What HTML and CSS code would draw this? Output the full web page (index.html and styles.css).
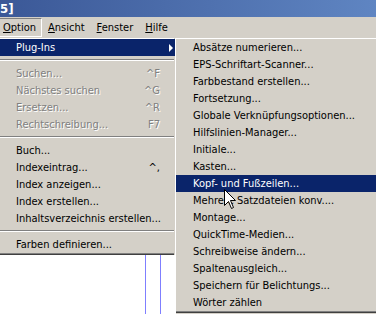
FILE: index.html
```html
<!DOCTYPE html>
<html lang="de">
<head>
    <meta charset="UTF-8">
    <title>Option - Plug-Ins</title>
    <link rel="stylesheet" href="styles.css">
</head>
<body>
<div class="titlebar"><span class="title">5]</span></div>
<div class="menubar">
    <span class="mb-item mb-open"><u>O</u>ption</span>
    <span class="mb-item"><u>A</u>nsicht</span>
    <span class="mb-item"><u>F</u>enster</span>
    <span class="mb-item"><u>H</u>ilfe</span>
</div>
<div class="workspace">
    <div class="leftcol">
        <ul class="menu main">
            <li class="item hot">Plug-Ins<span class="arrow"></span></li>
            <li class="sep"></li>
            <li class="item off">Suchen...<span class="key">^F</span></li>
            <li class="item off">Nächstes suchen<span class="key">^G</span></li>
            <li class="item off">Ersetzen...<span class="key">^R</span></li>
            <li class="item off">Rechtschreibung...<span class="key">F7</span></li>
            <li class="sep"></li>
            <li class="item">Buch...</li>
            <li class="item">Indexeintrag...<span class="key">^,</span></li>
            <li class="item">Index anzeigen...</li>
            <li class="item">Index erstellen...</li>
            <li class="item">Inhaltsverzeichnis erstellen...</li>
            <li class="sep"></li>
            <li class="item">Farben definieren...</li>
        </ul>
        <div class="doc">
            <span class="guide"></span>
            <span class="guide"></span>
        </div>
    </div>
    <ul class="menu sub">
        <li class="item">Absätze numerieren...</li>
        <li class="item">EPS-Schriftart-Scanner...</li>
        <li class="item">Farbbestand erstellen...</li>
        <li class="item">Fortsetzung...</li>
        <li class="item">Globale Verknüpfungsoptionen...</li>
        <li class="item">Hilfslinien-Manager...</li>
        <li class="item">Initiale...</li>
        <li class="item">Kasten...</li>
        <li class="item hot">Kopf- und Fußzeilen...</li>
        <li class="item">Mehrere Satzdateien konv....</li>
        <li class="item">Montage...</li>
        <li class="item">QuickTime-Medien...</li>
        <li class="item">Schreibweise ändern...</li>
        <li class="item">Spaltenausgleich...</li>
        <li class="item">Speichern für Belichtungs...</li>
        <li class="item">Wörter zählen</li>
    </ul>
</div>
<svg class="cursor" width="13" height="20" viewBox="0 0 13 20">
    <path d="M0.5 0.5 L0.5 16.5 L4.5 12.5 L7.5 19.5 L9.5 18.5 L6.5 11.5 L11.5 11.5 Z" fill="#fff" stroke="#000" stroke-width="1"/>
</svg>
</body>
</html>
```

FILE: styles.css
```css
html, body { margin:0; padding:0; }
body { width:376px; height:314px; overflow:hidden; position:relative; background:#d4d0c8;
       font-family:"DejaVu Sans Condensed","DejaVu Sans",sans-serif; font-size:11px; color:#000; }

.titlebar { height:17px; background:linear-gradient(to right,#3b5897,#5f85c2); color:#fff; overflow:hidden; }
.title { display:block; margin-left:0; font-weight:bold; font-size:13px; line-height:17px; }

.menubar { height:20px; display:flex; align-items:center; }
.mb-item { height:17px; line-height:17px; padding:0 6px; }
.mb-item u { text-decoration:underline; }
.mb-open { margin-left:-3px; padding:0 5px 0 5px; border:1px solid; border-color:#808080 #fff #fff #808080; }

.workspace { display:flex; align-items:flex-start; }
.leftcol { width:180px; margin-left:-3px; flex:none; }

.menu { list-style:none; margin:0; padding:1px; background:#d4d0c8;
        border:1px solid; border-color:#d4d0c8 #404040 #404040 #d4d0c8;
        box-shadow:inset 1px 1px #fff, inset -1px -1px #808080; }
.main { padding-bottom:1px; }
.item { position:relative; height:17px; line-height:17px; padding-left:17px; white-space:nowrap; }
.item.hot { background:#0a246a; color:#fff; }
.item.off { color:#808080; text-shadow:1px 1px 0 #fff; }
.key { position:absolute; right:15px; top:0; }
.sep { height:9px; position:relative; }
.sep::after { content:""; position:absolute; left:1px; right:1px; top:3px; height:1px; background:#808080; border-bottom:1px solid #fff; }
.arrow { position:absolute; right:2px; top:5px; width:0; height:0;
         border-left:4px solid #fff; border-top:4px solid transparent; border-bottom:4px solid transparent; }

.doc { height:60px; background:#fff; position:relative; margin-right:1px; }
.guide { position:absolute; top:0; bottom:0; width:1px; background:#7f7fff; }
.guide:first-child { left:148px; }
.guide:last-child { left:163px; }

.sub { width:210px; margin-left:-3px; flex:none; }

.cursor { position:absolute; left:224px; top:189px; }
```
